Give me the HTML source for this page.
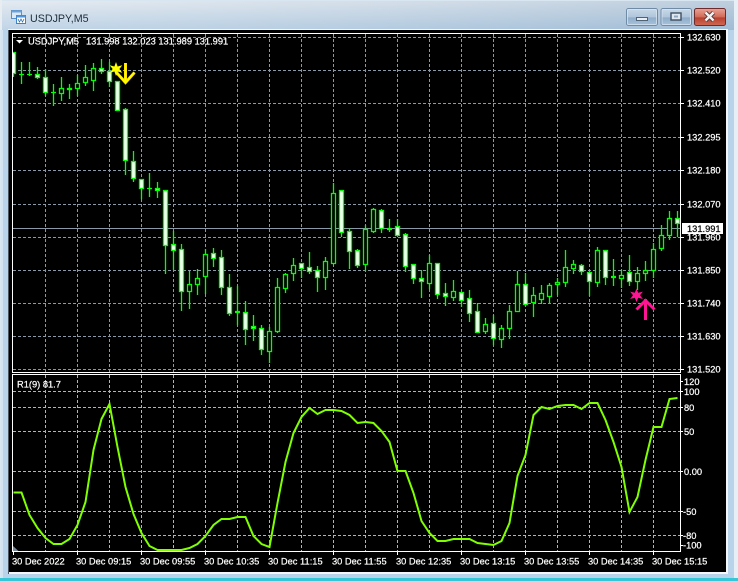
<!DOCTYPE html>
<html><head><meta charset="utf-8"><style>
html,body{margin:0;padding:0;background:#d8e6f2}
svg{display:block}
text{font-family:"Liberation Sans",sans-serif;font-size:9.3px;fill:#fff;stroke:#fff;stroke-width:.22px}
</style></head><body>
<svg width="738" height="581" viewBox="0 0 738 581" xmlns="http://www.w3.org/2000/svg">
<defs>
<linearGradient id="tb" x1="0" y1="0" x2="0" y2="1"><stop offset="0" stop-color="#dfe6ee"/><stop offset=".5" stop-color="#c9d9e8"/><stop offset="1" stop-color="#b5cde3"/></linearGradient>
<linearGradient id="tbx" x1="0" y1="0" x2="1" y2="0"><stop offset="0" stop-color="#fff" stop-opacity=".15"/><stop offset="1" stop-color="#5f87ab" stop-opacity=".25"/></linearGradient>
<linearGradient id="bb" x1="0" y1="0" x2="0" y2="1"><stop offset="0" stop-color="#c9d8e8"/><stop offset=".5" stop-color="#b0c6dc"/><stop offset=".55" stop-color="#8fadc9"/><stop offset="1" stop-color="#a9c3dc"/></linearGradient>
<linearGradient id="cb" x1="0" y1="0" x2="0" y2="1"><stop offset="0" stop-color="#e9a596"/><stop offset=".5" stop-color="#d26a58"/><stop offset=".55" stop-color="#b8402e"/><stop offset="1" stop-color="#cf6a55"/></linearGradient>
<clipPath id="main"><rect x="13" y="34" width="667" height="338"/></clipPath>
<clipPath id="ind"><rect x="13" y="375" width="667" height="176"/></clipPath>
</defs>
<!-- frame -->
<rect width="738" height="581" fill="#d8e6f2"/>
<rect x="1" y="1" width="734" height="578" fill="#b9d3ea"/>
<rect x="1" y="1" width="734" height="29" fill="url(#tb)"/>
<rect x="1" y="1" width="734" height="29" fill="url(#tbx)"/>
<rect x="0" y="0" width="2" height="30" fill="#e8edf2"/>
<rect x="1" y="30" width="2" height="549" fill="#d3e3f1"/>
<rect x="0" y="578" width="738" height="3" fill="#35c6d8"/>
<rect x="734" y="0" width="4" height="578" fill="#e6eff5"/>
<rect x="8" y="29" width="720" height="545" fill="#f4f7fa"/>
<rect x="9" y="30" width="717" height="542" fill="#000"/>
<rect x="8" y="30" width="1" height="544" fill="#4a5560"/>
<!-- title -->
<g>
<rect x="11.5" y="10.5" width="10" height="8" fill="#dbe9f7" stroke="#5a8fc4"/>
<rect x="11.5" y="10.5" width="10" height="2" fill="#6fa3d6"/>
<rect x="16.5" y="15.5" width="9" height="8" fill="#fff" stroke="#3f82c8"/>
<rect x="16.5" y="15.5" width="9" height="2" fill="#4f93d8"/>
<path d="M18 19l1.500 3 1.500-3 1.500 3 1.500-3" fill="none" stroke="#2c6fb5" stroke-width=".8"/>
</g>
<text x="30" y="22" style="font-size:10.7px;fill:#1e2c3a;stroke:none">USDJPY,M5</text>
<!-- buttons -->
<rect x="626.500" y="8.500" width="31" height="17" rx="2" fill="url(#bb)" stroke="#6f8ba6"/>
<rect x="627.500" y="9.500" width="29" height="15" rx="1" fill="none" stroke="#dce8f3" stroke-opacity=".7"/>
<rect x="636.500" y="17.500" width="11" height="3" fill="#e8eef4" stroke="#4f6376"/>
<rect x="661" y="8.500" width="30.500" height="17" rx="2" fill="url(#bb)" stroke="#6f8ba6"/>
<rect x="662" y="9.500" width="28.500" height="15" rx="1" fill="none" stroke="#dce8f3" stroke-opacity=".7"/>
<rect x="671" y="13" width="10" height="7" fill="#dfe8f0" stroke="#3e4f60" stroke-width="1.400"/>
<rect x="674" y="15.500" width="4" height="2" fill="#8fa8bf"/>
<rect x="694.500" y="8.500" width="31" height="17" rx="2" fill="url(#cb)" stroke="#6e2b2b"/>
<path d="M705.500 12.500l8 8M713.500 12.500l-8 8" stroke="#4a3035" stroke-width="4.200"/>
<path d="M705.500 12.500l8 8M713.500 12.500l-8 8" stroke="#f2f2f2" stroke-width="2.600"/>
<!-- main grid -->
<g shape-rendering="crispEdges">
<path d="M13 37.500H680M13 70.500H680M13 103.500H680M13 137.500H680M13 170.500H680M13 204.500H680M13 237.500H680M13 270.500H680M13 303.500H680M13 336.500H680M13 369.500H680" stroke="#8a99a8" stroke-dasharray="3 2" fill="none"/>
<path d="M45.500 34V372M77.500 34V372M109.500 34V372M141.500 34V372M173.500 34V372M205.500 34V372M237.500 34V372M269.500 34V372M301.500 34V372M333.500 34V372M365.500 34V372M397.500 34V372M429.500 34V372M461.500 34V372M493.500 34V372M525.500 34V372M557.500 34V372M589.500 34V372M621.500 34V372M653.500 34V372" stroke="#8a99a8" stroke-dasharray="3 2" fill="none"/>
<path d="M13 228.500H680" stroke="#8a99a8"/>
</g>
<!-- candles -->
<g clip-path="url(#main)" stroke-width="1.300">
<path fill="none" stroke="#0f0" d="M13.500 52V77M21.500 62V84M29.500 62V76M37.500 67V79M45.500 69V96M53.500 84V106M61.500 77V101M69.500 84V99M77.500 75V96M85.500 65V86M93.500 63V91M101.500 59V74M109.500 62V87M125.500 108V175M133.500 151V182M141.500 179V199M149.500 173V197M157.500 182V198M165.500 190V274M173.500 231V270M181.500 244V311M189.500 271V309M197.500 269V295M205.500 249V294M213.500 248V267M221.500 250V295M229.500 274V316M237.500 286V325M245.500 301V345M253.500 315V341M261.500 325V355M269.500 327V363M277.500 278V333M285.500 273V293M293.500 258V281M301.500 263V278M309.500 252V274M317.500 266V292M325.500 257V290M333.500 183V264M341.500 190V237M349.500 228V269M357.500 249V268M365.500 225V271M373.500 208V233M381.500 209V233M389.500 219V232M397.500 219V236M405.500 233V272M413.500 264V284M421.500 270V298M429.500 255V289M437.500 263V299M445.500 283V306M453.500 280V301M461.500 292V307M469.500 290V322M477.500 303V333M485.500 318V334M493.500 315V345M501.500 325V348M509.500 305V339M517.500 271V312M525.500 273V306M533.500 287V317M541.500 285V304M549.500 283V304M557.500 278V295M565.500 250V287M573.500 260V274M581.500 264V275M589.500 272V296M597.500 247V287M605.500 250V285M613.500 259V286M621.500 270V288M629.500 255V286M637.500 267V290M645.500 261V281M653.500 243V278M661.500 225V251M669.500 211V240M677.500 211V237"/>
<!-- bull hollow -->
<path fill="#000" stroke="#0f0" d="M59.500 88.500h4v5h-4zM75.500 83.500h4v5h-4zM83.500 77.500h4v5h-4zM91.500 68.500h4v12h-4zM187.500 284.500h4v7h-4zM195.500 278.500h4v6h-4zM203.500 254.500h4v22h-4zM267.500 331.500h4v20h-4zM275.500 287.500h4v44h-4zM283.500 274.500h4v14h-4zM291.500 265.500h4v8h-4zM323.500 261.500h4v16h-4zM331.500 193.500h4v70h-4zM363.500 229.500h4v35h-4zM371.500 209.500h4v22h-4zM427.500 263.500h4v20h-4zM451.500 291.500h4v6h-4zM483.500 324.500h4v7h-4zM499.500 328.500h4v11h-4zM507.500 311.500h4v17h-4zM515.500 284.500h4v27h-4zM531.500 295.500h4v7h-4zM539.500 293.500h4v6h-4zM547.500 285.500h4v11h-4zM555.500 282.500h4v2h-4zM563.500 267.500h4v15h-4zM571.500 264.500h4v4h-4zM595.500 250.500h4v32h-4zM619.500 275.500h4v3h-4zM635.500 273.500h4v8h-4zM643.500 270.500h4v3h-4zM651.500 249.500h4v21h-4zM659.500 235.500h4v13h-4zM667.500 218.500h4v17h-4z"/>
<!-- bear white -->
<path fill="#fff" stroke="#0f0" d="M11.500 52.500h4v21h-4zM35.500 74.500h4v3h-4zM43.500 77.500h4v15h-4zM99.500 68.500h4v3h-4zM107.500 71.500h4v10h-4zM115.500 81.500h4v29h-4zM123.500 109.500h4v51h-4zM131.500 161.500h4v17h-4zM139.500 179.500h4v9h-4zM155.500 188.500h4v2h-4zM163.500 190.500h4v55h-4zM171.500 244.500h4v6h-4zM179.500 249.500h4v42h-4zM211.500 253.500h4v5h-4zM219.500 257.500h4v30h-4zM227.500 287.500h4v26h-4zM243.500 312.500h4v17h-4zM251.500 326.500h4v2h-4zM259.500 328.500h4v21h-4zM299.500 263.500h4v5h-4zM307.500 267.500h4v4h-4zM315.500 270.500h4v7h-4zM339.500 190.500h4v42h-4zM347.500 231.500h4v20h-4zM355.500 250.500h4v15h-4zM379.500 210.500h4v18h-4zM395.500 226.500h4v9h-4zM403.500 234.500h4v32h-4zM411.500 264.500h4v14h-4zM419.500 278.500h4v3h-4zM435.500 263.500h4v31h-4zM443.500 293.500h4v3h-4zM459.500 292.500h4v8h-4zM467.500 298.500h4v15h-4zM475.500 311.500h4v21h-4zM491.500 323.500h4v15h-4zM523.500 284.500h4v20h-4zM579.500 265.500h4v6h-4zM587.500 272.500h4v9h-4zM603.500 250.500h4v27h-4zM627.500 272.500h4v9h-4zM675.500 218.500h4v5h-4z"/>
<!-- doji -->
<path fill="none" stroke="#0f0" d="M19 74.500h5M27 74.500h5M51 92.500h5M147 188.500h5M235 311.500h5M235 312.500h5M387 228.500h5M387 229.500h5M611 276.500h5M611 277.500h5"/>
<path fill="#fff" stroke="#0f0" d="M67.500 88.500h4v1h-4z"/>
</g>
<!-- markers -->
<g fill="none" stroke="#ffd800" stroke-width="3">
<path d="M125.500 63V83M116.500 72.500L125.500 82.500L134.500 72.500"/>
</g>
<g fill="none" stroke="#ffff00" stroke-width="1.600">
<path d="M125.500 63V83M116.500 72.500L125.500 82.500L134.500 72.500"/>
</g>
<path d="M116 62l1.600 4.500 4.700-1.300-2.900 3.800 2.900 3.800-4.700-1.300L116 76l-1.600-4.500-4.700 1.300 2.900-3.800-2.900-3.800 4.700 1.300z" fill="#ffff00"/>
<path d="M645.500 299V320M636.500 309.500L645.500 300.500L654.500 309.500" fill="none" stroke="#ff1493" stroke-width="3"/>
<path d="M636.500 288.500l1.700 4.300 4.700-1.200-2.900 3.700 2.900 3.700-4.700-1.200-1.700 4.300-1.700-4.300-4.700 1.200 2.900-3.700-2.900-3.700 4.700 1.200z" fill="#ff1493"/>
<!-- main frame -->
<path d="M12.500 33.500H680.500V372.500H12.500z" fill="none" stroke="#fff"/>
<path d="M681 37.500h3M681 70.500h3M681 103.500h3M681 137.500h3M681 170.500h3M681 204.500h3M681 237.500h3M681 270.500h3M681 303.500h3M681 336.500h3M681 369.500h3" stroke="#fff"/>
<path d="M16 40h7l-3.500 3.500z" fill="#fff"/>
<text x="28" y="44.500">USDJPY,M5</text>
<text x="86" y="44.500">131.998 132.023 131.989 131.991</text>
<text x="687" y="40.500">132.630</text>
<text x="687" y="73.500">132.520</text>
<text x="687" y="106.500">132.410</text>
<text x="687" y="140.500">132.295</text>
<text x="687" y="173.500">132.180</text>
<text x="687" y="207.500">132.070</text>
<text x="687" y="240.500">131.960</text>
<text x="687" y="273.500">131.850</text>
<text x="687" y="306.500">131.740</text>
<text x="687" y="339.500">131.630</text>
<text x="687" y="372.500">131.520</text>
<rect x="682" y="223" width="41" height="11" fill="#fff"/>
<text x="687" y="232" style="fill:#000;stroke:#000">131.991</text>
<!-- indicator -->
<g shape-rendering="crispEdges">
<path d="M13 391.500H680M13 407.500H680M13 431.500H680M13 471.500H680M13 511.500H680M13 535.500H680" stroke="#b4b4b4" stroke-dasharray="3 2" fill="none"/>
<path d="M45.500 375V551M77.500 375V551M109.500 375V551M141.500 375V551M173.500 375V551M205.500 375V551M237.500 375V551M269.500 375V551M301.500 375V551M333.500 375V551M365.500 375V551M397.500 375V551M429.500 375V551M461.500 375V551M493.500 375V551M525.500 375V551M557.500 375V551M589.500 375V551M621.500 375V551M653.500 375V551" stroke="#b4b4b4" stroke-dasharray="3 2" fill="none"/>
</g>
<path d="M13 546l6 5.500h-6z" fill="#778899"/>
<polyline clip-path="url(#ind)" fill="none" stroke="#7fff00" stroke-width="2" points="13.500,492.500 21.500,492.500 29.500,515 37.500,528 45.500,538 53.500,544 61.500,544 69.500,539 77.500,525 85.500,502 93.500,450 101.500,419 109.500,404 117.500,447 125.500,487 133.500,514 141.500,533 149.500,546 157.500,550 165.500,550 173.500,550 181.500,550 189.500,548 197.500,544 205.500,536 213.500,525 221.500,519 229.500,519 237.500,517 245.500,517 253.500,536 261.500,544 269.500,547 277.500,503 285.500,462 293.500,433 301.500,417 309.500,408 317.500,414 325.500,410 333.500,410 341.500,411 349.500,415 357.500,423 365.500,422 373.500,423 381.500,431 389.500,442 397.500,471 405.500,471 413.500,493 421.500,521 429.500,533 437.500,541 445.500,541 453.500,539 461.500,539 469.500,539 477.500,543 485.500,544 493.500,545 501.500,541 509.500,523 517.500,476 525.500,455 533.500,415 541.500,407 549.500,409 557.500,406 565.500,405 573.500,405 581.500,409 589.500,403 597.500,403 605.500,420 613.500,442 621.500,467 629.500,512 637.500,497 645.500,460 653.500,427 661.500,427 669.500,399 677.500,398"/>
<path d="M12.500 374.500H680.500V551.500H12.500z" fill="none" stroke="#fff"/>
<path d="M13.500 552v3M77.500 552v3M141.500 552v3M205.500 552v3M269.500 552v3M333.500 552v3M397.500 552v3M461.500 552v3M525.500 552v3M589.500 552v3M653.500 552v3M681 381.500h2M681 391.500h2M681 407.500h2M681 431.500h2M681 471.500h2M681 511.500h2M681 535.500h2M681 545.500h2" stroke="#fff"/>
<text x="17" y="387.500">R1(9) 81.7</text>
<text x="684" y="385">120</text>
<text x="684" y="395">100</text>
<text x="684" y="411">80</text>
<text x="684" y="435">50</text>
<text x="684" y="475">0.00</text>
<text x="683" y="515">-50</text>
<text x="683" y="539">-80</text>
<text x="683" y="548.500">-100</text>
<text x="12" y="564.500">30 Dec 2022</text>
<text x="76" y="564.500">30 Dec 09:15</text>
<text x="140" y="564.500">30 Dec 09:55</text>
<text x="204" y="564.500">30 Dec 10:35</text>
<text x="268" y="564.500">30 Dec 11:15</text>
<text x="332" y="564.500">30 Dec 11:55</text>
<text x="396" y="564.500">30 Dec 12:35</text>
<text x="460" y="564.500">30 Dec 13:15</text>
<text x="524" y="564.500">30 Dec 13:55</text>
<text x="588" y="564.500">30 Dec 14:35</text>
<text x="652" y="564.500">30 Dec 15:15</text>
</svg>
</body></html>
